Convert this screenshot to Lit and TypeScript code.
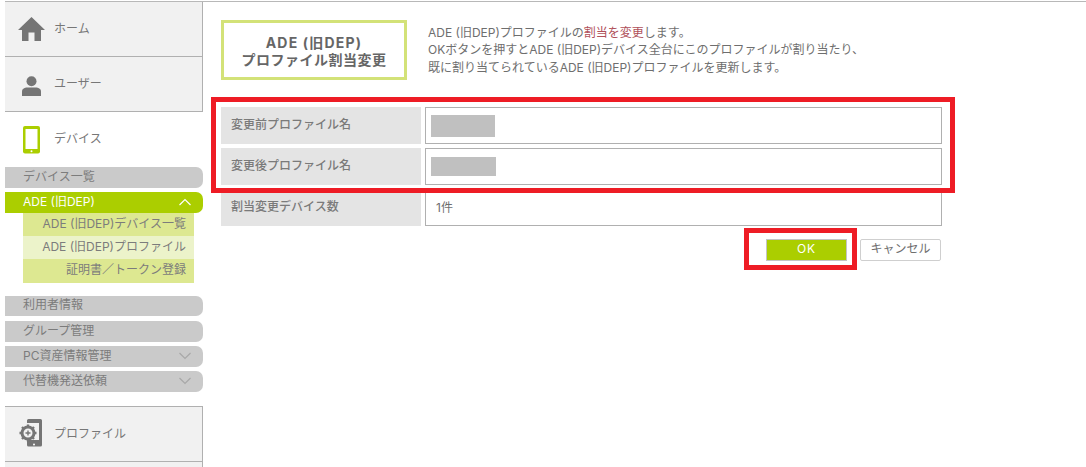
import { LitElement, html, css } from "lit";
import { customElement } from "lit/decorators.js";

const chevron = (up: boolean, color: string) => html`<svg class="chev" width="14" height="8" viewBox="0 0 14 8"><path d="${up ? "M1.5 7 L7 1.5 L12.5 7" : "M1.5 1 L7 6.5 L12.5 1"}" fill="none" stroke="${color}" stroke-width="1.2"/></svg>`;

@customElement("app-root")
export class AppRoot extends LitElement {
  static styles = css`
    :host { display: block; width: 1086px; height: 467px; position: relative; overflow: hidden; background: #fff;
      font-family: Inter, "Noto Sans CJK JP", sans-serif; font-size: 12px; color: #6e6e6e; }
    .page { display: flex; height: 467px; box-sizing: border-box; padding-left: 5px; }
    .page::before { content: ""; position: absolute; left: 5px; right: 0; top: 1px; height: 1px; background: #b8b8b8; }
    .side { width: 198px; flex: none; padding-top: 1px; display: flex; flex-direction: column; }
    .card { height: 55px; flex: none; box-sizing: border-box; background: #f1f1f1; border-right: 1px solid #b0b0b0; border-bottom: 1px solid #b0b0b0;
      display: flex; align-items: center; font-size: 12px; color: #777; }
    .card.home { height: 56px; }
    .card .ic { width: 49px; flex: none; display: flex; justify-content: center; padding-left: 3px; box-sizing: border-box; }
    .card .lbl { margin-top: -1px; }
    .card.home .lbl { margin-top: -3px; }
    .card.user .ic { margin-top: 3px; }
    .card.user .lbl { margin-top: -3px; }
    .card.active { background: #fff; border: none; height: 53px; }
    .card.active .ic { margin-top: 2px; }
    .card.active .lbl { margin-top: -3px; }
    .card.last { margin-top: 14px; border-top: 1px solid #b0b0b0; height: 56px; padding-bottom: 2px; }
    .card.rest { height: 8px; border-bottom: none; }
    .menu { display: flex; flex-direction: column; }
    .mi { height: 21px; flex: none; border-radius: 0 7px 7px 0; background: #cacaca; color: #7c7c7c; display: flex; align-items: center;
      justify-content: space-between; padding: 0 11px 2px 18px; margin-top: 4px; box-sizing: border-box; line-height: 1; }
    .mi.first { margin-top: 2px; }
    .mi.on { background: #abce00; color: #fff; }
    .mi.sep { margin-top: 13px; height: 20px; }
    .mi.after { margin-top: 5px; }
    .subs { margin-left: 18px; width: 171px; display: flex; flex-direction: column; }
    .sub { height: 23px; flex: none; background: #dde891; color: #7c7c7c; display: flex; align-items: center; justify-content: flex-end; padding: 0 8px 2px 0; box-sizing: border-box; line-height: 1; }
    .sub.cur { background: #ecf3ca; }
    .sub.tall { height: 24px; }
    .main { flex: 1; padding: 20px 0 0 18px; box-sizing: border-box; }
    .head { display: flex; gap: 21px; }
    .title { width: 186px; height: 60px; box-sizing: border-box; border: 3px solid #d3e278; display: flex; flex-direction: column; align-items: center; justify-content: center;
      font-size: 14px; letter-spacing: .5px; font-weight: 700; color: #666; line-height: 17px; padding-top: 2px; }
    .title .wide { letter-spacing: 1.2px; }
    .desc { line-height: 17.5px; padding-top: 3.5px; color: #6e6e6e; font-size: 12px; }
    .desc b { font-weight: 400; color: #b0505a; }
    .rows { margin-top: 27px; width: 721px; display: flex; flex-direction: column; gap: 4px; }
    .row { display: flex; height: 37px; gap: 4px; }
    .k { width: 200px; background: #e4e4e4; display: flex; align-items: center; padding: 0 0 2px 10px; box-sizing: border-box; font-weight: 500; color: #7a7a7a; line-height: 1; }
    .v { flex: 1; border: 1px solid #b0b0b0; box-sizing: border-box; display: flex; align-items: center; padding-left: 5px; }
    .v.t { padding: 0 0 3px 10px; }
    .blank { background: #c0c0c0; }
    .b1 { width: 64px; height: 22px; }
    .b2 { width: 65px; height: 19px; }
    .btns { display: flex; justify-content: flex-end; gap: 13px; margin-top: 13px; width: 720px; }
    .btn { width: 81px; height: 22px; box-sizing: border-box; display: flex; align-items: center; justify-content: center; line-height: 1; padding-bottom: 2px; }
    .ok { background: #abce00; border: 1px solid #c4c4c4; color: #fff; letter-spacing: 1px; padding-bottom: 3px; }
    .cancel { background: #fff; border: 1px solid #cfcfcf; border-radius: 2px; color: #6e6e6e; }
    .red { position: absolute; border: 5px solid #ee1c25; box-sizing: border-box; }
    .r1 { left: 211px; top: 97px; width: 744px; height: 96px; }
    .r2 { left: 744px; top: 228px; width: 113px; height: 42px; }
  `;

  render() {
    return html`
      <div class="page">
        <nav class="side">
          <div class="card home">
            <span class="ic"><svg width="27" height="24" viewBox="0 0 27 24"><path fill="#757575" d="M13.5 0 L27 13 L23 13 L23 24 L16.5 24 L16.5 15.5 L10.5 15.5 L10.5 24 L4 24 L4 13 L0 13 Z"/></svg></span>
            <span class="lbl">ホーム</span>
          </div>
          <div class="card user">
            <span class="ic"><svg width="19" height="20" viewBox="0 0 19 20"><circle cx="9.5" cy="5.2" r="5" fill="#757575"/><path fill="#757575" d="M0 20 V15.5 C0 12.5 3 11.5 5 11.5 H14 C16 11.5 19 12.5 19 15.5 V20 Z"/></svg></span>
            <span class="lbl">ユーザー</span>
          </div>
          <div class="card active">
            <span class="ic"><svg width="17" height="28" viewBox="0 0 17 28"><rect width="17" height="27.5" rx="2" fill="#abce00"/><rect x="2.5" y="3" width="12" height="20" fill="#fff"/><circle cx="8.5" cy="25.2" r="1" fill="#fff"/></svg></span>
            <span class="lbl">デバイス</span>
          </div>
          <div class="menu">
            <div class="mi first">デバイス一覧</div>
            <div class="mi on">ADE (旧DEP)${chevron(true, "#fff")}</div>
            <div class="subs">
              <div class="sub">ADE (旧DEP)デバイス一覧</div>
              <div class="sub cur">ADE (旧DEP)プロファイル</div>
              <div class="sub tall">証明書／トークン登録</div>
            </div>
            <div class="mi sep">利用者情報</div>
            <div class="mi after">グループ管理</div>
            <div class="mi">PC資産情報管理${chevron(false, "#a8a8a8")}</div>
            <div class="mi">代替機発送依頼${chevron(false, "#a8a8a8")}</div>
          </div>
          <div class="card last">
            <span class="ic"><svg width="24" height="28" viewBox="0 0 24 28"><path fill="#757575" d="M8 1.5 a1.5 1.5 0 0 1 1.5 -1.5 H21.5 a1.5 1.5 0 0 1 1.5 1.5 V26 a1.5 1.5 0 0 1 -1.5 1.5 H9.5 A1.5 1.5 0 0 1 8 26 V21 H20 V4 H8 Z"/><circle cx="15" cy="25.5" r="1" fill="#fff"/><circle cx="9" cy="14" r="6" fill="none" stroke="#757575" stroke-width="3"/><path stroke="#757575" stroke-width="2.4" d="M9 5.5 V8 M9 20 V22.5 M.5 14 H3 M15 14 H17.5 M3 8 L4.8 9.8 M13.2 18.2 L15 20 M3 20 L4.8 18.2 M13.2 9.8 L15 8"/><path stroke="#757575" stroke-width="1.4" d="M6.5 14 H11.5 M9 11.5 V16.5"/></svg></span>
            <span class="lbl">プロファイル</span>
          </div>
          <div class="card rest"></div>
        </nav>
        <main class="main">
          <div class="head">
            <div class="title"><span class="wide">ADE (旧DEP)</span><span>プロファイル割当変更</span></div>
            <div class="desc">
              ADE (旧DEP)プロファイルの<b>割当を変更</b>します。<br>
              OKボタンを押すとADE (旧DEP)デバイス全台にこのプロファイルが割り当たり、<br>
              既に割り当てられているADE (旧DEP)プロファイルを更新します。
            </div>
          </div>
          <div class="rows">
            <div class="row"><div class="k">変更前プロファイル名</div><div class="v"><div class="blank b1"></div></div></div>
            <div class="row"><div class="k">変更後プロファイル名</div><div class="v"><div class="blank b2"></div></div></div>
            <div class="row"><div class="k">割当変更デバイス数</div><div class="v t">1件</div></div>
          </div>
          <div class="btns">
            <div class="btn ok">OK</div>
            <div class="btn cancel">キャンセル</div>
          </div>
        </main>
      </div>
      <div class="red r1"></div>
      <div class="red r2"></div>
    `;
  }
}
